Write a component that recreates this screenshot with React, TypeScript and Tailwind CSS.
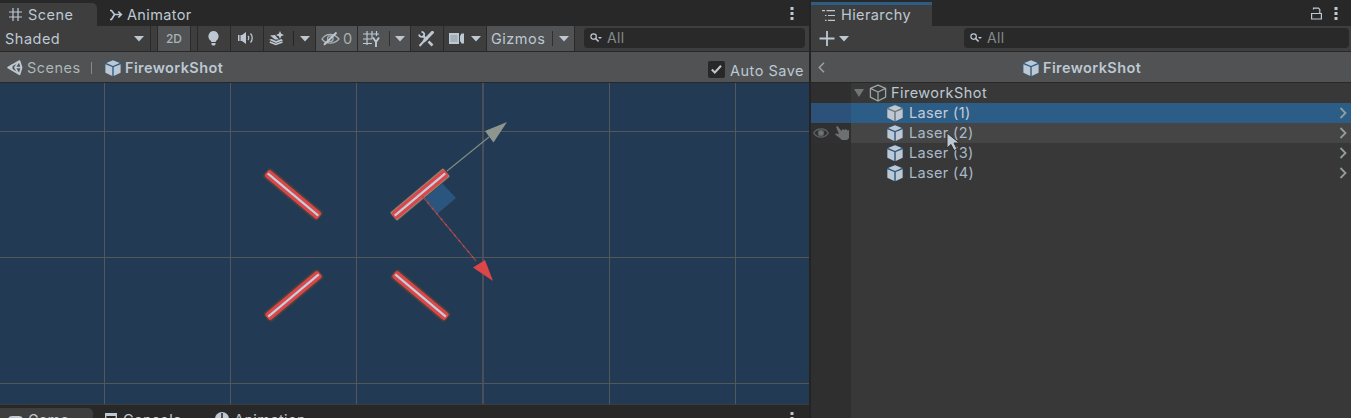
import React from "react";

const INK = "#bdc8d3";

function Dots() {
  return (
    <svg width="4" height="13" viewBox="0 0 4 13" fill={INK}>
      <rect x="0.5" y="0" width="3" height="3" />
      <rect x="0.5" y="5" width="3" height="3" />
      <rect x="0.5" y="10" width="3" height="3" />
    </svg>
  );
}

function Caret() {
  return (
    <svg width="10" height="6" viewBox="0 0 10 6" fill={INK} className="shrink-0">
      <path d="M0 0h10L5 5.6z" />
    </svg>
  );
}

function Cube({ outline = false, ring = "#2c5d87" }: { outline?: boolean; ring?: string }) {
  if (outline) {
    return (
      <svg width="18" height="18" viewBox="0 0 18 18" fill="none" stroke="#9aa6a6" strokeWidth="1.3" strokeLinejoin="round" className="shrink-0">
        <path d="M9 1.2 16.6 4.4v8.8L9 17 1.4 13.2V4.4z M1.4 4.4 9 8l7.6-3.6M9 8v9" />
      </svg>
    );
  }
  return (
    <svg width="18" height="18" viewBox="0 0 18 18" className="shrink-0">
      <path d="M9 .6 17 4v9.800L9 17.400 1 13.800V4z" fill={ring} />
      <path d="M9 1.200 15.800 4 9 6.900 2.200 4z M1.400 5.200 8.300 8.100v8.800L1.400 13.700z M16.600 5.200 9.700 8.100v8.800l6.900-3.200z" fill={INK} />
    </svg>
  );
}

function Magnifier() {
  return (
    <svg width="12" height="10" viewBox="0 0 12 10" fill="none" stroke={INK} className="shrink-0">
      <circle cx="3.600" cy="3.600" r="2.700" strokeWidth="1.200" />
      <path d="m5.600 5.500 3 3" strokeWidth="1.700" />
      <path d="M8 4h4l-2 2z" fill={INK} stroke="none" />
    </svg>
  );
}

function SearchField({ className }: { className: string }) {
  return (
    <div className={"flex h-5 items-center rounded-[4px] bg-[#292929] pl-[6px] " + className}>
      <Magnifier />
      <span className="ml-[5px] text-[14px] leading-5 tracking-[0.3px] text-[#838b8c]">All</span>
    </div>
  );
}

function Laser({ x, y, angle, selected = false }: { x: number; y: number; angle: number; selected?: boolean }) {
  return (
    <g transform={`translate(${x} ${y}) rotate(${angle})`}>
      <rect x="-35.5" y="-6" width="71" height="12" rx="3" fill="#47423f" />
      {selected && <rect x="-34.5" y="-5.3" width="69" height="10.6" rx="1" fill="#8b8c83" />}
      <rect x="-34.5" y="-4.3" width="69" height="8.6" rx="2.5" fill="#dc4648" />
      <rect x="-33" y="-1.1" width="66" height="2.2" fill="#c2cedb" />
    </g>
  );
}

function SceneCanvas() {
  return (
    <svg width="809" height="321" viewBox="0 83 809 321" className="block bg-[#223a53]">
      <g stroke="#53565b" strokeWidth="1">
        <path d="M0 131.5H809M0 257.5H809M0 383.5H809" />
        <path d="M104.5 83V404M230.5 83V404M356.5 83V404M609.5 83V404M735.5 83V404" />
        <path d="M483 83V404" strokeWidth="1.6" />
      </g>
      <Laser x={293} y={194.5} angle={40} />
      <Laser x={293.5} y={295.5} angle={-40} />
      <Laser x={420.5} y={295.5} angle={40} />
      <path d="M439 180 456 198 437 214 423 197z" fill="#2a557e" />
      <Laser x={420} y={194.5} angle={-40} selected />
      <path d="M447 171 489 137" stroke="#858c85" strokeWidth="1.1" />
      <path d="M485 131 507 122 493.5 142.500z" fill="#8d958f" />
      <path d="M423 197 476 261" stroke="#7d4b50" strokeWidth="1.3" />
      <path d="m423 197 53 64" stroke="#d14849" strokeWidth="1.2" strokeDasharray="2 5" />
      <path d="M473 267.5 485 260 493 281z" fill="#dc4648" />
    </svg>
  );
}

function SceneTabs() {
  return (
    <div className="flex h-[26px] items-end bg-[#282828]">
      <div className="flex h-[23px] w-[97px] items-center rounded-tr-[5px] bg-[#3e3e3e] pl-[9px]">
        <svg width="13" height="13" viewBox="0 0 13 13" stroke={INK} strokeWidth="1.2">
          <path d="M4 0v13M9 0v13M0 4h13M0 9h13" />
        </svg>
        <span className="ml-[6px] text-[14.5px] leading-5 tracking-[0.5px]">Scene</span>
      </div>
      <div className="flex h-[23px] flex-1 items-center pl-[12px]">
        <svg width="14" height="12" viewBox="0 0 14 12" fill="none" stroke={INK} strokeWidth="1.7">
          <path d="M1 1.500H2.500L5.500 5.500H12M1 10.500H2.500L5.500 5.500M9.300 2.500 12.300 5.500 9.300 8.500" />
        </svg>
        <span className="ml-[4px] text-[14.5px] leading-5 tracking-[0.35px]">Animator</span>
      </div>
      <div className="mr-[15px] flex h-[26px] items-center">
        <Dots />
      </div>
    </div>
  );
}

function SceneToolbar() {
  return (
    <div className="flex h-[25px] bg-[#3e3e3e]">
      <div className="flex w-[151px] shrink-0 items-center justify-between border-r border-[#2a2a2a] pr-[6px] pl-[5px]">
        <span className="text-[14.5px] tracking-[0.5px]">Shaded</span>
        <Caret />
      </div>
      <div className="w-[7px] shrink-0 border-r border-[#2a2a2a]" />
      <div className="flex w-[33px] shrink-0 items-center justify-center border-r border-[#2a2a2a] bg-[#505254] text-[12px] font-medium text-[#a9b3b8]">2D</div>
      <div className="w-[7px] shrink-0 border-r border-[#2a2a2a]" />
      <div className="flex w-[33px] shrink-0 items-center justify-center border-r border-[#2a2a2a] pr-[2px]">
        <svg width="11" height="15" viewBox="0 0 11 15" fill={INK}>
          <path d="M5.500 0a5.300 5.300 0 0 1 3 9.500L7.500 11h-4L2.500 9.500a5.300 5.300 0 0 1 3-9.500zM3.500 12h4v1.500l-1 1h-2l-1-1z" />
        </svg>
      </div>
      <div className="flex w-[33px] shrink-0 items-center justify-center border-r border-[#2a2a2a] pr-1 pb-[2px]">
        <svg width="17" height="12" viewBox="0 0 17 12" fill={INK}>
          <path d="M1 3h1.500v6H1zM3.500 3H5l4-3v12L5 9H3.500z" />
          <path d="M11 4c1 1 1 3 0 4M13.500 1.500c2.300 2.500 2.300 6.500 0 9" fill="none" stroke={INK} strokeWidth="1.3" />
        </svg>
      </div>
      <div className="flex w-[52px] shrink-0 items-center border-r border-[#2a2a2a] pl-[5px]">
        <svg width="16" height="15" viewBox="0 0 16 15" fill={INK}>
          <path d="M1 4.500 6 4 8 6.500 10 8.500 6 8.500zM0 8.800 2.500 8 7 10 12.500 8 14 9.500 7 12z" />
          <path d="M.8 11 6.800 13.500 13.500 11" fill="none" stroke={INK} strokeWidth="1.600" />
          <path d="m11 0 1.200 2.800L15 4l-2.800 1.200L11 8 9.800 5.200 7 4l2.800-1.200z" />
        </svg>
        <span className="mr-[6px] ml-[8px] h-[15px] w-px bg-[#252525]" />
        <Caret />
      </div>
      <div className="flex w-[42px] shrink-0 items-center border-r border-[#2a2a2a] bg-[#505254] pl-[5px]">
        <svg width="19" height="14" viewBox="0 0 19 14" fill="none" stroke="#a7b0b3" strokeWidth="1.3">
          <path d="M1 7C5 1 13 1 18 7 13 12.500 5 12.500 1 7z" />
          <circle cx="9.300" cy="6.700" r="2.800" />
          <path d="M3 12.800 15.500.5" stroke={INK} strokeWidth="1.900" />
        </svg>
        <span className="ml-[3px] text-[14.5px] text-[#a7b0b3]">0</span>
      </div>
      <div className="flex w-[53px] shrink-0 items-center border-r border-[#2a2a2a] bg-[#505254] pl-[5px]">
        <svg width="18" height="18" viewBox="0 0 18 18" fill="none" stroke={INK} strokeWidth="1.2">
          <path d="M4 1v14M9 1v8M13.500 1v5M0 4h16M0 9h9M0 13.500h9" />
          <path d="m10 7.500 3 4.500 3-4.500M13 12v5" strokeWidth="1.9" />
        </svg>
        <span className="mr-[5px] ml-[8px] h-[15px] w-px bg-[#303030]" />
        <Caret />
      </div>
      <div className="flex w-[33px] shrink-0 items-center justify-center border-r border-[#2a2a2a] pr-[2px]">
        <svg width="16" height="16" viewBox="0 0 16 16" fill="none" stroke={INK}>
          <path d="M5 4.800 9 9M10.500 10.500 14.500 14.500" strokeWidth="2.5" />
          <path d="M1 3.500C1.500 6 4 6.500 5.500 5S6 1 3.500.8" strokeWidth="1.8" />
          <path d="M14.300 1.500 6.500 9.500" strokeWidth="3.2" strokeLinecap="round" />
          <path d="M6.500 9.500 1.500 15" strokeWidth="1.900" />
        </svg>
      </div>
      <div className="flex w-[43px] shrink-0 items-center border-r border-[#2a2a2a] pl-[5px]">
        <svg width="16" height="11" viewBox="0 0 16 11" fill={INK}>
          <path d="M0 0h10v11H0zM11 3l1.500-2.500H15v10h-2.500L11 8z" />
          <path d="M1.500 2h7v7h-7z" fill="#a5afb8" />
        </svg>
        <span className="w-[6px]" />
        <Caret />
      </div>
      <div className="flex w-[88px] shrink-0 items-center border-r border-[#2a2a2a] bg-[#505254] pl-[4px]">
        <span className="w-[54px] text-[14.5px] tracking-[0.5px]">Gizmos</span>
        <span className="mr-[6px] ml-[7px] h-[15px] w-px bg-[#303030]" />
        <Caret />
      </div>
      <div className="flex flex-1 items-start pt-[2px] pr-[4px] pl-[9px]">
        <SearchField className="flex-1" />
      </div>
    </div>
  );
}

function SceneBreadcrumb() {
  return (
    <div className="flex h-[32px] items-center border-y border-[#282828] bg-[#505254] pt-px">
      <svg width="16" height="16" viewBox="0 0 16 16" fill="none" stroke={INK} strokeLinejoin="round" className="ml-[7px]">
        <path d="M1.200 7.500 12.500 1.200 14.500 7.500 12.500 14.200z" strokeWidth="1.900" />
        <path d="M14 7.500H8L11.500 2M8 7.500l3.500 6" strokeWidth="1.600" />
        <path d="M1 7.500 5.500 4v7z" fill={INK} stroke="none" />
      </svg>
      <span className="ml-[4px] w-[55px] text-[14.5px] tracking-[0.5px] text-[#adb6b8]">Scenes</span>
      <span className="ml-[9px] h-[12px] w-px bg-[#858b8c]" />
      <span className="ml-[12px] flex"><Cube /></span>
      <span className="ml-[3px] text-[14.5px] font-semibold tracking-[0.4px]">FireworkShot</span>
      <span className="mt-[4px] mr-[5px] ml-auto flex items-center">
        <span className="flex size-[17px] items-center justify-center rounded-[2px] bg-[#282828]">
          <svg width="11" height="9" viewBox="0 0 11 9" fill="none" stroke={INK} strokeWidth="2">
            <path d="m.8 4.500 3 3L10 .8" />
          </svg>
        </span>
        <span className="mt-[3px] ml-[5px] text-[14.5px] leading-5 tracking-[0.5px]">Auto Save</span>
      </span>
    </div>
  );
}

function BottomTabs() {
  return (
    <div className="flex h-[14px] overflow-hidden border-t border-[#3c3c3c] bg-[#282828]">
      <div className="mt-[3px] flex h-[24px] w-[93px] shrink-0 rounded-tr-[5px] bg-[#3e3e3e] pl-[8px]">
        <svg width="16" height="12" viewBox="0 0 16 12" className="mt-[8px]" fill={INK}>
          <rect width="15" height="11" rx="4" />
        </svg>
        <span className="mt-[2px] ml-[4px] text-[14.5px] leading-5 tracking-[0.3px]">Game</span>
      </div>
      <div className="flex h-[24px] w-[120px] shrink-0 pt-[5px] pl-[12px]">
        <svg width="12" height="12" viewBox="0 0 12 12" fill="none" stroke={INK} className="mt-[3px]">
          <path d="M.7.700h10.600v10.600H.700z" strokeWidth="1.4" />
          <path d="M0 1.500h12" strokeWidth="3" />
          <path d="M2 5.500h6" />
        </svg>
        <span className="ml-[6px] text-[14.5px] leading-5 tracking-[0.4px]">Console</span>
      </div>
      <div className="flex h-[24px] flex-1 pt-[5px] pl-[2px]">
        <svg width="14" height="14" viewBox="0 0 14 14" className="mt-[2px]">
          <circle cx="7" cy="7" r="7" fill={INK} />
          <path d="M7 1v7" stroke="#282828" strokeWidth="1.5" />
        </svg>
        <span className="ml-[5px] text-[14.5px] leading-5 tracking-[0.4px]">Animation</span>
      </div>
      <div className="mt-[7px] mr-[15px]"><Dots /></div>
    </div>
  );
}

function Chevron() {
  return (
    <svg width="8" height="12" viewBox="0 0 8 12" fill="none" stroke="#929d9c" strokeWidth="1.8" className="mr-[4px] ml-auto">
      <path d="M1.500 1l5 5-5 5" />
    </svg>
  );
}

type RowProps = { name: string; state?: "selected" | "hover" };

function LaserRow({ name, state }: RowProps) {
  const tone = state === "selected" ? "bg-[#2c5d87]" : state === "hover" ? "bg-[#454545]" : "";
  const gutter = state === "selected" ? "bg-[#2c527a]" : state === "hover" ? "bg-[#303030]" : "";
  return (
    <div className="flex h-5">
      <div className={"flex w-10 shrink-0 items-center pl-[2px] " + gutter}>
        {state === "hover" && (
          <>
            <svg width="16" height="12" viewBox="0 0 16 12" fill="none" stroke="#5f6364" strokeWidth="1.4">
              <path d="M.8 6C4 .500 12 .500 15.200 6 12 11.500 4 11.500.8 6z" />
              <circle cx="8" cy="6" r="2.500" fill="#73797a" />
            </svg>
            <svg width="15" height="14" viewBox="0 0 15 14" className="ml-[6px]" fill="#6c7071">
              <path d="M1 1 2.500 0 6.500 5 7.500 3 9.500 4 11 3l1.500 1.500L14 4v8l-2 2H7L3.500 11 0 8.500 1 7.500l3 .5z" />
            </svg>
          </>
        )}
      </div>
      <div className={"flex min-w-0 flex-1 items-center pl-[35px] " + tone}>
        <Cube ring={state === "selected" ? "#68747d" : "#2c557e"} />
        <span className={"ml-[5px] text-[14.5px] leading-5 tracking-[0.35px] " + (state === "selected" ? "text-[#c3cdd6]" : "text-[#a9bac8]")}>{name}</span>
        <Chevron />
      </div>
    </div>
  );
}

function HierarchyPanel() {
  return (
    <section className="flex w-[540px] flex-col bg-[#383838]">
      <div className="flex h-[26px] shrink-0 items-end bg-[#282828]">
        <div className="flex h-[24px] w-[121px] items-center border-t-[3px] border-[#2c5d87] bg-[#3e3e3e] pb-px pl-[11px]">
          <svg width="14" height="11" viewBox="0 0 14 11" stroke={INK} strokeWidth="1.2">
            <path d="M0 .600h3M4.500.600H13M3 5.500h1.500M6 5.500h7M3 10.400h1.500M6 10.400h7" />
          </svg>
          <span className="ml-[5px] text-[14.5px] leading-5 tracking-[0.4px]">Hierarchy</span>
        </div>
        <div className="mr-[13px] ml-auto flex h-[26px] items-center">
          <svg width="11" height="13" viewBox="0 0 11 13" fill="none" stroke={INK} strokeWidth="1.2" className="mr-[12px]">
            <path d="M.6 6.500h9.800v5.500H.600zM2.500 2.500V1.200h5l1.300 1.300v4" />
          </svg>
          <Dots />
        </div>
      </div>
      <div className="flex h-[25px] shrink-0 items-center bg-[#3e3e3e]">
        <svg width="16" height="15" viewBox="0 0 16 15" stroke={INK} strokeWidth="1.8" className="ml-[8px]">
          <path d="M8 0v15M.500 7.500h15" />
        </svg>
        <span className="ml-[4px]"><Caret /></span>
        <SearchField className="-mt-px mr-[2px] ml-auto w-[385px]" />
      </div>
      <div className="flex h-[32px] shrink-0 items-center border-y border-[#282828] bg-[#505254] pt-px">
        <svg width="7" height="11" viewBox="0 0 7 11" fill="none" stroke="#9aa3a3" strokeWidth="1.5" className="ml-[7px]">
          <path d="M6 .800 1.300 5.500 6 10.200" />
        </svg>
        <div className="ml-[197px] flex items-center">
          <Cube />
          <span className="ml-[3px] text-[14.5px] font-semibold tracking-[0.4px]">FireworkShot</span>
        </div>
      </div>
      <div className="flex-1 bg-[linear-gradient(to_right,#2f2f2f_40px,transparent_40px)]">
        <div className="flex h-5 items-center pl-[43px]">
          <svg width="10" height="8" viewBox="0 0 10 8" fill="#707575"><path d="M0 0h10L5 8z" /></svg>
          <span className="ml-[5px] flex"><Cube outline /></span>
          <span className="ml-[4px] text-[14.5px] leading-5 tracking-[0.45px]">FireworkShot</span>
        </div>
        <LaserRow name="Laser (1)" state="selected" />
        <LaserRow name="Laser (2)" state="hover" />
        <LaserRow name="Laser (3)" />
        <LaserRow name="Laser (4)" />
      </div>
    </section>
  );
}

export default function App() {
  return (
    <main className="relative flex h-[418px] w-[1351px] overflow-hidden bg-[#242424] font-['Inter',sans-serif] text-[#bdc8d3]">
      <section className="mr-[2px] flex w-[809px] flex-col">
        <SceneTabs />
        <SceneToolbar />
        <SceneBreadcrumb />
        <SceneCanvas />
        <BottomTabs />
      </section>
      <HierarchyPanel />
      <svg width="14" height="20" viewBox="0 0 14 20" className="absolute top-[132px] left-[946px]">
        <path d="M1 1v15l4-3.500 3 6 3-1.500-3-6h5.500z" fill={INK} stroke="#303030" strokeWidth="1" />
      </svg>
    </main>
  );
}
